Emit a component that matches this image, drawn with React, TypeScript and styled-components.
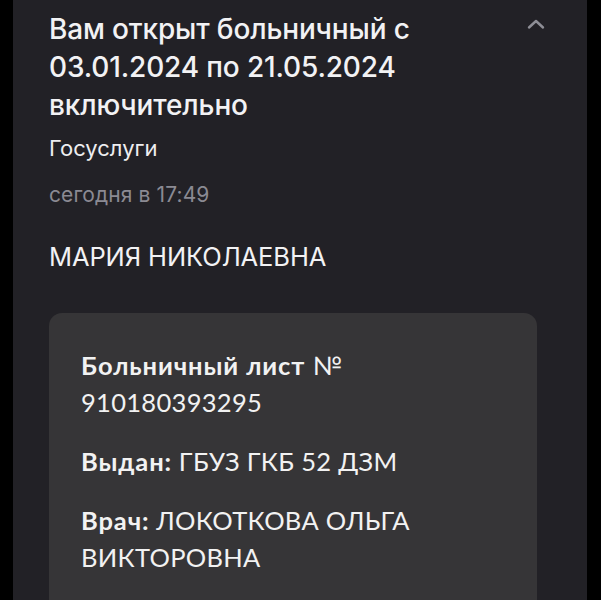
import * as React from "react";
import styled, { createGlobalStyle } from "styled-components";

const GlobalStyle = createGlobalStyle`
  html, body {
    margin: 0;
    padding: 0;
    background: #000;
  }
  body {
    font-family: Inter, "Noto Sans", sans-serif;
    -webkit-font-smoothing: antialiased;
  }
`;

const Page = styled.div`
  width: 601px;
  height: 600px;
  overflow: hidden;
  background: #000;
  padding: 0 14px 0 13px;
  box-sizing: border-box;
`;

const Panel = styled.section`
  background: #222126;
  height: 100%;
  padding: 10px 0 0 36px;
  box-sizing: border-box;
`;

const Header = styled.div`
  display: flex;
  align-items: flex-start;
  justify-content: space-between;
`;

const Title = styled.h1`
  margin: 0;
  color: #f2f2f4;
  font-size: 28px;
  font-weight: 500;
  line-height: 38px;
  letter-spacing: -0.15px;
  width: 400px;
`;

const Toggle = styled.button`
  background: none;
  border: 0;
  padding: 0;
  margin: 8px 42px 0 0;
  color: #8e8e96;
  display: flex;
`;

const Source = styled.div`
  color: #eeeef0;
  font-size: 22px;
  line-height: 26px;
  margin-top: 11px;
`;

const Time = styled.div`
  color: #8b8a93;
  font-size: 21px;
  line-height: 26px;
  margin-top: 21px;
  letter-spacing: 0.1px;
`;

const Name = styled.div`
  color: #f2f2f4;
  font-size: 25.5px;
  line-height: 30px;
  margin-top: 34px;
  letter-spacing: -0.1px;
`;

const Card = styled.div`
  margin: 41px 50px 0 0;
  background: #363537;
  border-radius: 13px;
  padding: 34px 32px 30px;
  font-family: Lato, "Noto Sans", sans-serif;
  color: #f2f2f2;
  font-size: 25.5px;
  line-height: 37px;
  letter-spacing: 0.3px;
  height: 320px;
  box-sizing: border-box;
`;

const Field = styled.p`
  margin: 0 0 22px;
  width: 390px;
`;

const Label = styled.b`
  font-weight: 700;
  letter-spacing: 0.9px;
`;

export default function App() {
  return (
    <>
      <GlobalStyle />
      <Page>
        <Panel>
          <Header>
            <Title>Вам открыт больничный с 03.01.2024 по 21.05.2024 включительно</Title>
            <Toggle aria-label="Свернуть">
              <svg width="18" height="12" viewBox="0 0 18 12" fill="none">
                <path
                  d="M2 9.5 L9 3 L16 9.5"
                  stroke="currentColor"
                  strokeWidth="2.4"
                  strokeLinecap="round"
                  strokeLinejoin="round"
                />
              </svg>
            </Toggle>
          </Header>
          <Source>Госуслуги</Source>
          <Time>сегодня в 17:49</Time>
          <Name>МАРИЯ НИКОЛАЕВНА</Name>
          <Card>
            <Field>
              <Label>Больничный лист </Label>№ 910180393295
            </Field>
            <Field>
              <Label>Выдан:</Label> ГБУЗ ГКБ 52 ДЗМ
            </Field>
            <Field>
              <Label>Врач:</Label> ЛОКОТКОВА ОЛЬГА ВИКТОРОВНА
            </Field>
          </Card>
        </Panel>
      </Page>
    </>
  );
}
